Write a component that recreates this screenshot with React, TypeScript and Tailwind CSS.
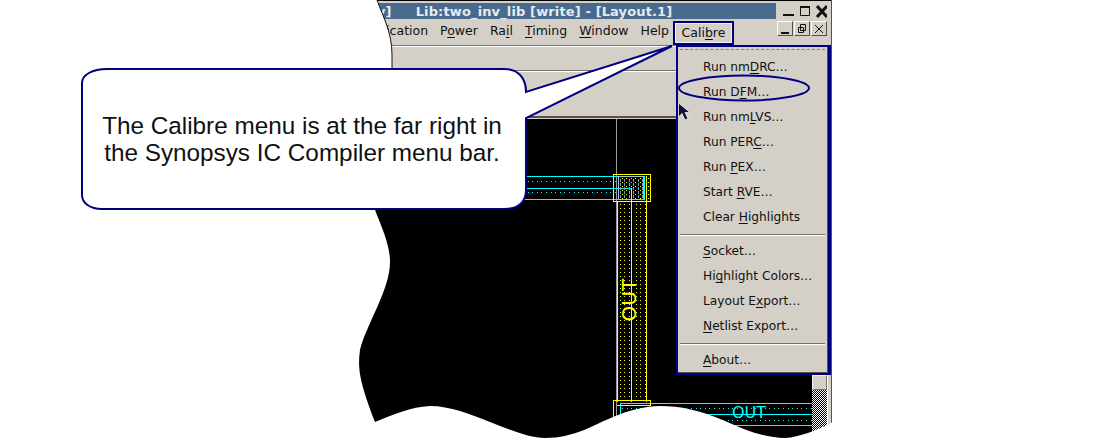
import React from "react";

const NAVY = "#000080";

function Mn({ a, u, b }: { a: string; u: string; b?: string }) {
  return (
    <span>
      {a}
      <span className="underline underline-offset-2 decoration-1">{u}</span>
      {b}
    </span>
  );
}

function Item({ a, u, b }: { a: string; u: string; b?: string }) {
  return (
    <div className="h-[25px] flex items-center pl-[25px] text-[12.2px] text-[#111]">
      <Mn a={a} u={u} b={b} />
    </div>
  );
}

function Sep() {
  return <div className="mx-[2px] mt-[4px] mb-[3px] h-[1px] bg-[#77736c] border-b border-white box-content" />;
}

function MdiButton({ children }: { children: React.ReactNode }) {
  return (
    <div className="w-[16px] h-[15px] bg-[#d4d0c8] border border-t-white border-l-white border-r-[#55524c] border-b-[#55524c] flex items-center justify-center">
      {children}
    </div>
  );
}

function Dots({ x0, y0, x1, y1, sx, sy, w = 1, h = 1, fill }: { x0: number; y0: number; x1: number; y1: number; sx: number; sy: number; w?: number; h?: number; fill: string }) {
  const out: React.ReactNode[] = [];
  for (let y = y0; y < y1; y += sy) {
    for (let x = x0; x < x1; x += sx) {
      out.push(<rect key={`${x}-${y}`} x={Math.round(x)} y={Math.round(y)} width={w} height={h} fill={fill} />);
    }
  }
  return <g>{out}</g>;
}

function LayoutArt() {
  return (
    <svg className="block w-full h-full" viewBox="355 119 457 321" shapeRendering="crispEdges">
      <rect x="355" y="119" width="457" height="321" fill="#000" />
      <line x1="616.5" y1="119" x2="616.5" y2="425" stroke="#9a9a9a" />
      {/* upper horizontal wire */}
      <Dots x0={500} y0={181} x1={618} y1={200} sx={4.6} sy={11.2} fill="#00ffff" />
      <Dots x0={500} y0={192} x1={618} y1={200} sx={4.6} sy={11.2} fill="#00ffff" />
      <path d="M500 176.5H645M500 188.5H631M500 199.5H645" stroke="#00ffff" fill="none" />
      <Dots x0={620} y0={179} x1={644} y1={199} sx={4.4} sy={4} w={1} h={3} fill="#5fa8c8" />
      <Dots x0={622} y0={178} x1={644} y1={199} sx={4.4} sy={4} fill="#ffff00" />
      <path d="M618.5 176.5H644.5M618.5 176.5V199.5" stroke="#a8c8d8" fill="none" />
      <path d="M644 176V200" stroke="#00ffff" strokeWidth="2" fill="none" />
      <path d="M646.5 176V202" stroke="#ffff00" fill="none" />
      <Dots x0={648} y0={178} x1={650} y1={200} sx={4.4} sy={4} fill="#ffff00" />
      <rect x="613.5" y="174.5" width="37" height="27" fill="none" stroke="#ffff00" />
      {/* vertical wire */}
      <Dots x0={620} y0={204} x1={630} y1={400} sx={4.4} sy={4} fill="#ffff00" />
      <Dots x0={636} y0={204} x1={646} y1={400} sx={4.4} sy={4} fill="#ffff00" />
      <path d="M617.5 202V402M631.5 188V402M646.5 202V402" stroke="#ffff00" fill="none" />
      <text
        x="636"
        y="322"
        transform="rotate(-90 636 322)"
        fill="#ffff00"
        fontSize="20"
        fontFamily="'DejaVu Sans', sans-serif"
        shapeRendering="auto"
      >
        OUT
      </text>
      {/* lower horizontal wire */}
      <Dots x0={622} y0={408} x1={812} y1={426} sx={4.6} sy={11.5} fill="#00ffff" />
      <Dots x0={622} y0={419.5} x1={812} y1={426} sx={4.6} sy={11.5} fill="#00ffff" />
      <path d="M620 403.5H812M620 414.5H812M620 425.5H812M620.5 403V425" stroke="#00ffff" fill="none" />
      <path d="M613.5 400.5H650.5V405.5H617M613.5 400V432" stroke="#ffff00" fill="none" />
      <text x="732" y="418" fill="#00ffff" fontSize="16" fontFamily="'DejaVu Sans', sans-serif" shapeRendering="auto">
        OUT
      </text>
    </svg>
  );
}

export default function App() {
  return (
    <div className="relative w-[1120px] h-[440px] overflow-hidden bg-white font-['DejaVu_Sans',sans-serif]">
      <div className="flex pl-[355px] h-full">
        {/* application window */}
        <div className="w-[477px] h-full flex flex-col bg-[#d4d0c8] border-r border-[#55524c]">
          <div className="h-[19px] flex pt-[2px] bg-[#d4d0c8] border-t border-black">
            <div className="w-[421px] h-[16px] bg-[#486a8c] flex items-center pl-[22px] text-[13px] font-bold text-[#e4ecf0] whitespace-pre leading-none tracking-[0.13px]">
              <span>y]</span>
              <span className="ml-[24px]">Lib:two_inv_lib [write] - [Layout.1]</span>
            </div>
            <svg className="ml-[5px]" width="46" height="16" viewBox="0 0 46 16">
              <rect x="2" y="11" width="11" height="2" fill="#111" />
              <path d="M19.5 3.5h9v9h-9z" fill="none" stroke="#111" />
              <rect x="19" y="3" width="10" height="2" fill="#111" />
              <path d="M36 3l10 11M46 3l-10 11" stroke="#111" strokeWidth="3" />
            </svg>
          </div>
          <div className="h-[27px] flex items-end border-b border-[#77736c]">
            <div className="w-[379px] h-[26px] flex items-end justify-end gap-[12px] text-[12.5px] text-[#111]">
              <span className="mb-[4px]">Application</span>
              <span className="mb-[4px]"><Mn a="P" u="o" b="wer" /></span>
              <span className="mb-[4px]"><Mn a="Ra" u="i" b="l" /></span>
              <span className="mb-[4px]"><Mn a="" u="T" b="iming" /></span>
              <span className="mb-[4px]"><Mn a="" u="W" b="indow" /></span>
              <span className="mb-[4px]">Help</span>
              <div className="-ml-[8px] w-[61px] h-[24px] border-2 border-[#000080] flex items-center justify-center">
                <div className="w-full h-full flex items-center justify-center border border-[#f4f2ee]">
                  <Mn a="Cali" u="b" b="re" />
                </div>
              </div>
            </div>
            <div className="ml-[43px] mb-[9px] flex gap-[1px]">
              <MdiButton>
                <div className="w-[8px] h-[2px] bg-[#111] mt-[8px]" />
              </MdiButton>
              <MdiButton>
                <svg width="10" height="11" viewBox="0 0 10 11">
                  <path d="M3.5 1.5h5v6h-5zM1.5 4.5h5v5h-5z" fill="none" stroke="#111" />
                </svg>
              </MdiButton>
              <MdiButton>
                <svg width="10" height="10" viewBox="0 0 10 10">
                  <path d="M1 1l8 8M9 1l-8 8" stroke="#111" />
                </svg>
              </MdiButton>
            </div>
          </div>
          <div className="h-[25px] border-t border-white border-b border-b-[#77736c]" />
          <div className="h-[47px] border-t border-white border-b-2 border-b-[#55524c]" />
          <div className="flex-1 flex min-h-0">
            <div className="w-[457px] h-full">
              <LayoutArt />
            </div>
            {/* scrollbar */}
            <div className="w-[15px] h-full flex flex-col justify-end bg-black">
              <div className="h-[15px] bg-[#d4d0c8] border border-[#f4f2ee] border-b-[#77736c] border-r-[#77736c]" />
              <div className="h-[50px] bg-[repeating-conic-gradient(#000_0_25%,#fff_0_50%)] bg-[length:2px_2px]" />
            </div>
            <div className="flex-1 border-l border-white" />
          </div>
        </div>
      </div>

      {/* torn edge of the screenshot */}
      <svg className="absolute inset-0" width="1120" height="440" viewBox="0 0 1120 440">
        <path
          d="M0 0H377C383 17 392 32 392 55V210H375C382 228 390 245 390 262C390 290 366 325 360 350C357 370 361 385 375 422C395 414 410 407 430 406C450 406 470 414 490 422C510 430 530 438 545 438C575 438 595 424 613 417C630 410 645 406 660 406C680 406 700 410 725 421C745 430 765 438 785 438C800 437 815 431 833 422V0H1120V440H0Z"
          fill="#fff"
        />
        <path d="M377 0C383 17 392 32 392 55V70" fill="none" stroke="#111" />
      </svg>

      {/* Calibre menu */}
      <div className="absolute left-[676px] top-[45px] w-[155px] h-[330px] bg-[#d4d0c8] border-2 border-r-[3px] border-[#000080]">
        <div className="h-full border-r border-b border-[#55524c] pt-[2px]">
          <div className="mx-[2px] border-t border-dashed border-[#8a867f]" />
          <div className="pt-[5px]">
            <Item a="Run nm" u="D" b="RC…" />
            <Item a="Run D" u="F" b="M…" />
            <Item a="Run nm" u="L" b="VS…" />
            <Item a="Run PER" u="C" b="…" />
            <Item a="Run " u="P" b="EX…" />
            <Item a="Start " u="R" b="VE…" />
            <Item a="Clear " u="H" b="ighlights" />
            <Sep />
            <Item a="" u="S" b="ocket…" />
            <Item a="Hi" u="g" b="hlight Colors…" />
            <Item a="Layout E" u="x" b="port…" />
            <Item a="" u="N" b="etlist Export…" />
            <Sep />
            <Item a="" u="A" b="bout…" />
          </div>
        </div>
      </div>

      {/* annotation: callout, ellipse and pointer */}
      <svg className="absolute inset-0" width="1120" height="440" viewBox="0 0 1120 440">
        <path
          d="M107 69H505C518 69 526 78 526 92L672 46L526 118V190C526 202 518 209 505 209H102C90 209 82 203 82 195V83C82 75 92 69 107 69Z"
          fill="#fff"
          stroke={NAVY}
          strokeWidth="2"
          strokeLinejoin="miter"
        />
        <ellipse cx="744" cy="88" rx="65" ry="12.5" fill="none" stroke={NAVY} strokeWidth="2" />
        <path d="M678.5 103V117L682 113.5L685 120L688 118.5L685 112.5H690Z" fill="#10103a" stroke="#fff" strokeWidth="0.7" />
      </svg>
      <div className="absolute left-[82px] top-[69px] w-[440px] h-[140px] flex items-center justify-center text-center font-['Liberation_Sans',sans-serif] text-[24.3px] leading-[27px] text-[#111]">
        <p>
          The Calibre menu is at the far right in
          <br />
          the Synopsys IC Compiler menu bar.
        </p>
      </div>
    </div>
  );
}
